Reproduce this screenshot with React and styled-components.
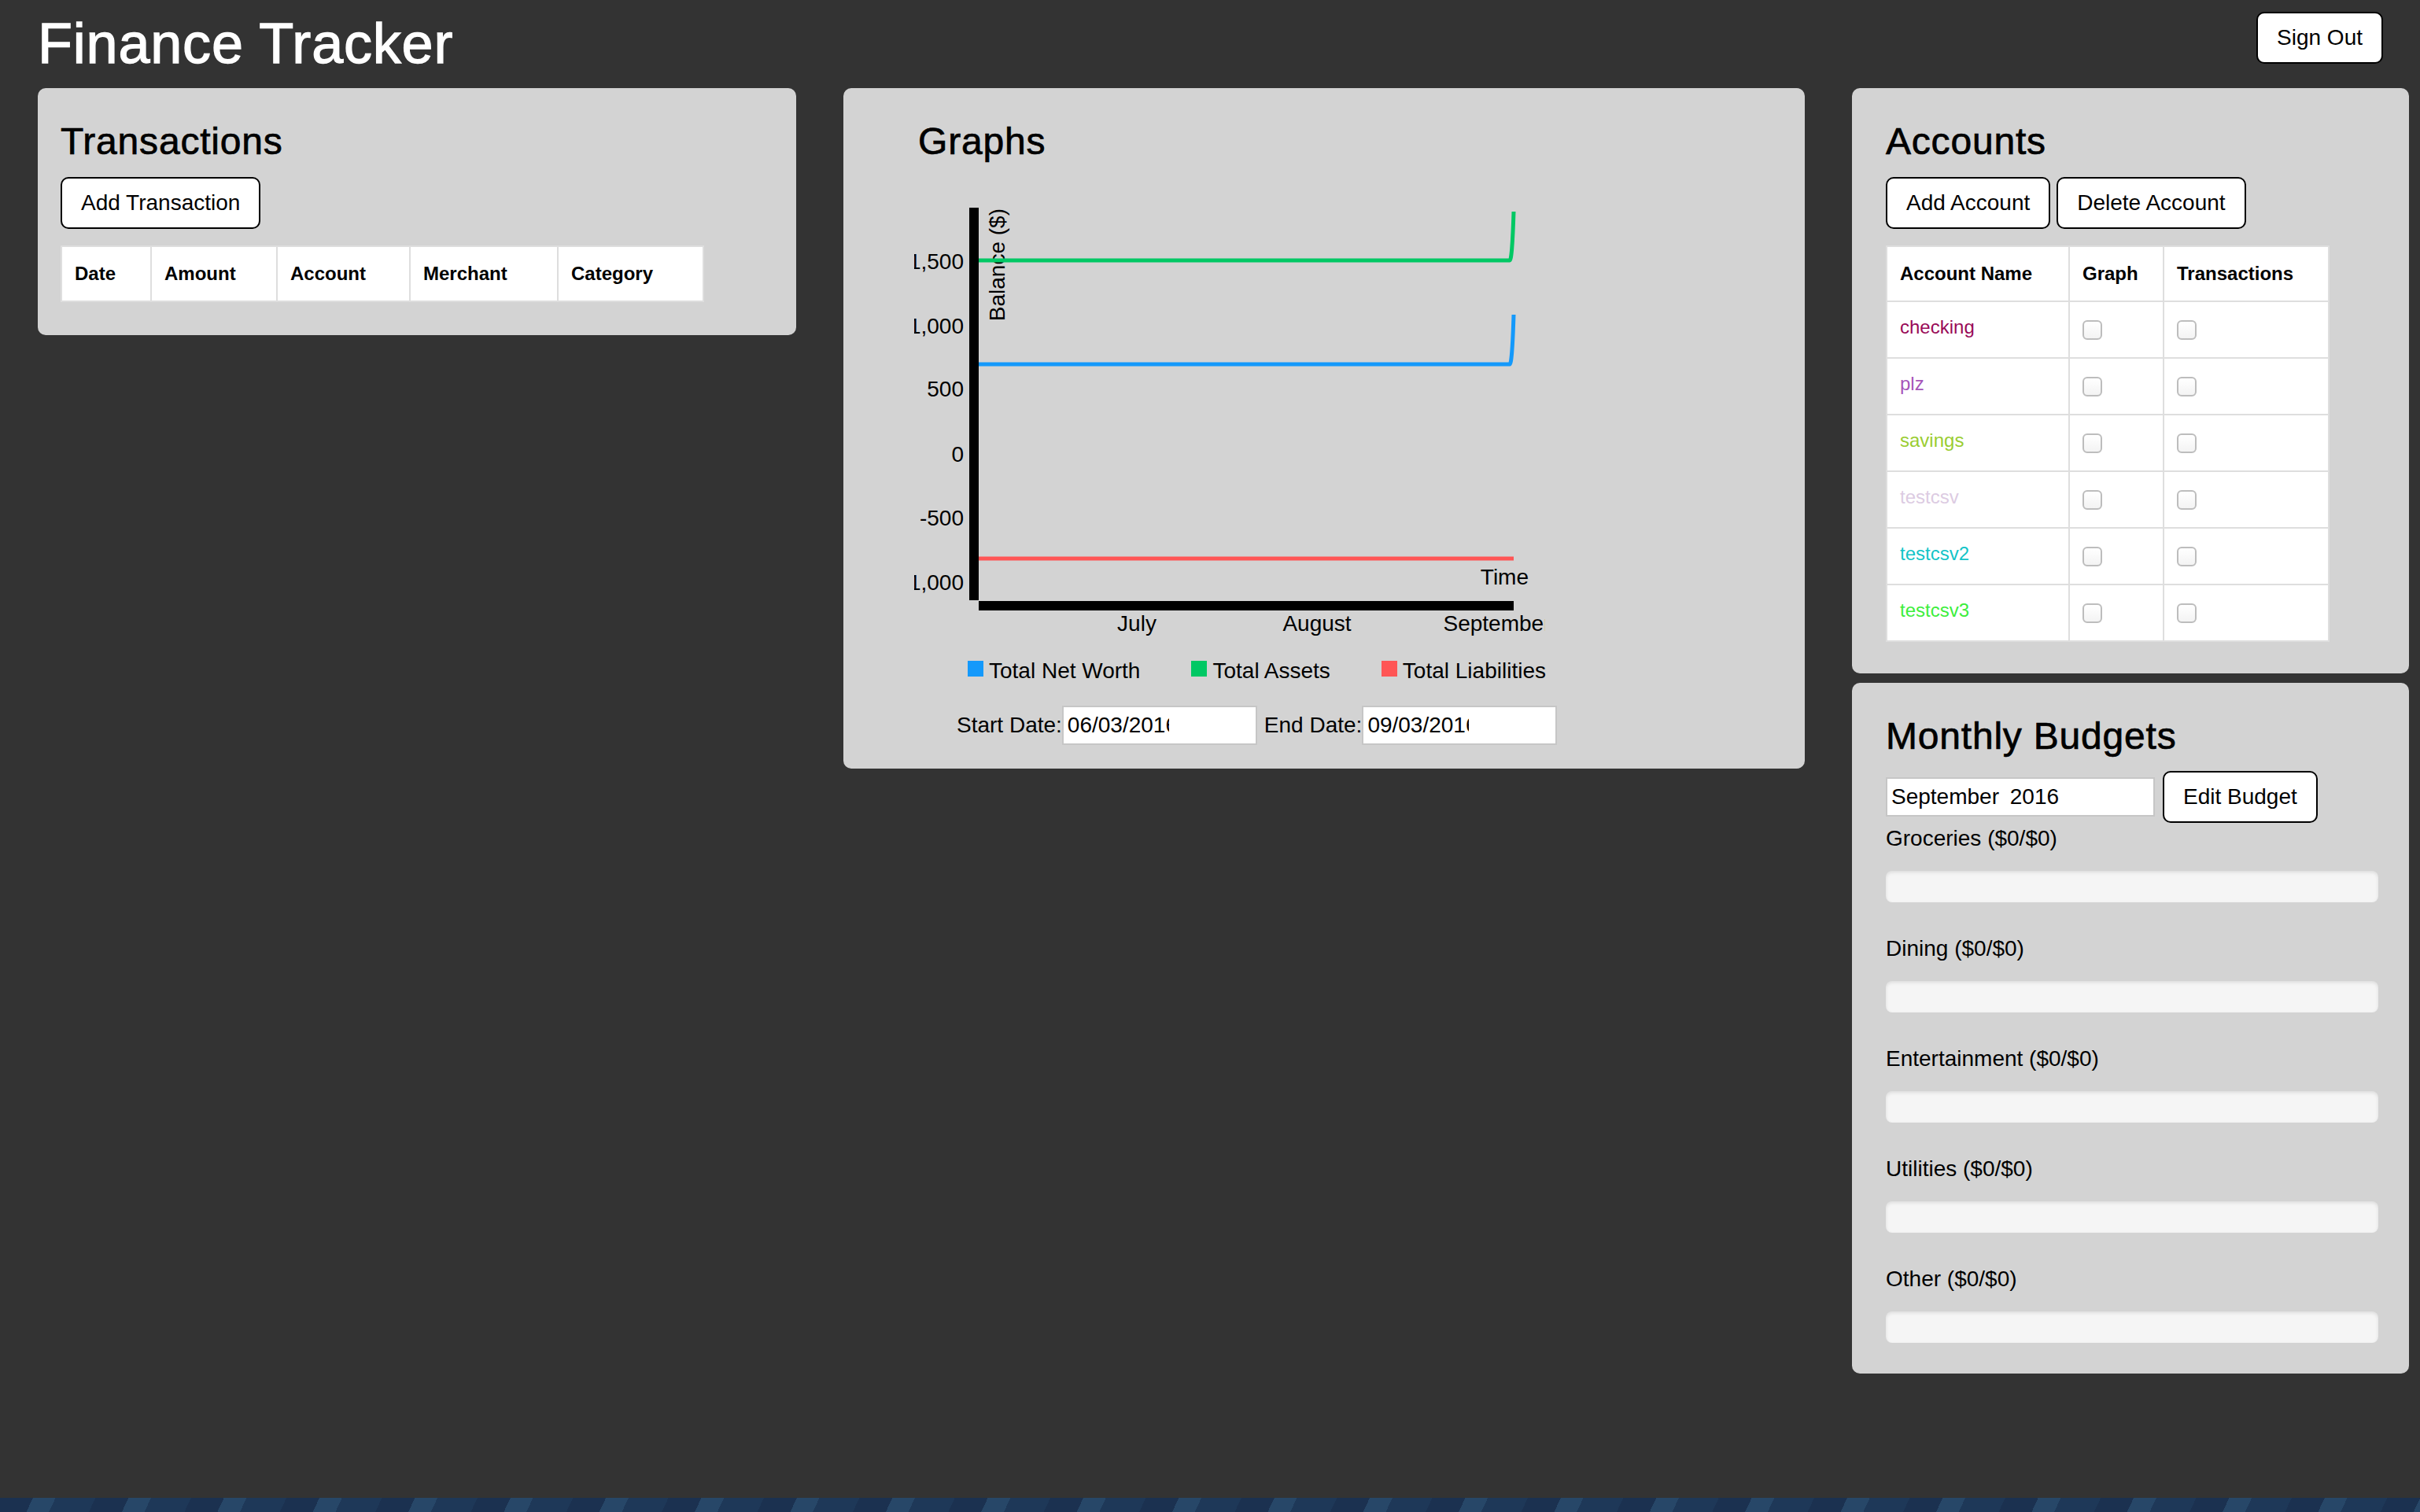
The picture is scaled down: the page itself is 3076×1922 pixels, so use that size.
import React from 'react';
import styled, { createGlobalStyle } from 'styled-components';

const GlobalStyle = createGlobalStyle`
  html, body {
    margin: 0;
    padding: 0;
    background: #333;
  }
  body {
    font-family: "Liberation Sans", Arial, Helvetica, sans-serif;
    color: #000;
  }
`;

const Page = styled.div`
  min-height: 1922px;
  display: flex;
  flex-direction: column;
  background: #333;
`;

const Main = styled.div`
  flex: 1;
`;

// the strip of desktop below the browser window
const DesktopStrip = styled.div`
  height: 18px;
  background: repeating-linear-gradient(
    115deg,
    #1b3150 0px,
    #1b3150 38px,
    #274768 38px,
    #274768 64px,
    #1e3858 64px,
    #1e3858 110px
  );
`;

const Header = styled.header`
  display: flex;
  justify-content: space-between;
  align-items: flex-start;
  box-sizing: border-box;
  height: 112px;
  padding: 15px 47px 0 48px;
`;

const Title = styled.h1`
  margin: 0;
  font-size: 72px;
  line-height: 80px;
  font-weight: 400;
  letter-spacing: 0.8px;
  color: #fff;
  -webkit-text-stroke: 1.3px #fff;
`;

const Button = styled.button`
  display: inline-flex;
  align-items: center;
  height: 66px;
  box-sizing: border-box;
  padding: 0 24px;
  background: #fff;
  border: 2px solid #000;
  border-radius: 10px;
  font-family: inherit;
  font-size: 28px;
  color: #000;
  cursor: pointer;
`;

const Columns = styled.div`
  display: grid;
  grid-template-columns: 964px 1222px 708px;
  column-gap: 60px;
  align-items: start;
  padding-left: 48px;
`;

const Stack = styled.div`
  display: flex;
  flex-direction: column;
  gap: 12px;
`;

const Panel = styled.section`
  background: #d3d3d3;
  border-radius: 10px;
  box-sizing: border-box;
  padding: 40px ${p => p.$right || 0}px ${p => p.$bottom || 0}px ${p => p.$left || 0}px;
`;

const PanelTitle = styled.h2`
  margin: 0 0 ${p => p.$gap || 0}px ${p => p.$indent || 0}px;
  font-size: 48px;
  line-height: 56px;
  font-weight: 400;
  letter-spacing: 0.8px;
  -webkit-text-stroke: 0.7px #000;
`;

const ButtonRow = styled.div`
  display: flex;
  gap: 8px;
`;

const Table = styled.table`
  margin-top: 21px;
  border-collapse: collapse;
  table-layout: fixed;
  width: ${p => p.$width}px;
  background: #fff;
  font-size: 24px;

  th, td {
    border: 2px solid #dedede;
    padding: 0 0 0 16px;
    text-align: left;
    box-sizing: border-box;
  }
  th {
    height: 70px;
    font-weight: 700;
  }
  td {
    height: 72px;
  }
`;

const AccountName = styled.span`
  color: ${p => p.$color};
  position: relative;
  top: -3px;
`;

const Check = styled.input.attrs({ type: 'checkbox' })`
  appearance: none;
  -webkit-appearance: none;
  display: block;
  margin: 0;
  width: 25px;
  height: 25px;
  box-sizing: border-box;
  border: 2px solid #bdbdbd;
  border-radius: 6px;
  background: linear-gradient(#fff, #f3f3f3);
`;

// ---- graphs ----

const ChartSvg = styled.svg`
  display: block;
  margin: 42px 0 0 90px;
  overflow: hidden;
  font-family: "Liberation Sans", Arial, Helvetica, sans-serif;
  font-size: 28px;
`;

const Legend = styled.div`
  display: flex;
  gap: 65px;
  margin: 22px 0 0 158px;
  font-size: 28px;
  line-height: 32px;
`;

const LegendItem = styled.div`
  display: flex;
  align-items: flex-start;
  gap: 7px;
`;

const Swatch = styled.span`
  width: 20px;
  height: 20px;
  margin-top: 3px;
  background: ${p => p.$color};
`;

const DateRow = styled.div`
  display: flex;
  align-items: center;
  margin: 28px 0 0 144px;
  font-size: 28px;
  line-height: 32px;
`;

const DateLabel = styled.span`
  margin-left: ${p => p.$gap || 0}px;
`;

const DateField = styled.div`
  display: flex;
  align-items: center;
  width: 248px;
  height: 50px;
  box-sizing: border-box;
  padding-left: 5px;
  background: #fff;
  border: 2px solid #c6c6c6;
`;

const DateValue = styled.span`
  display: inline-block;
  width: 129px;
  overflow: hidden;
  white-space: nowrap;
`;

// ---- budgets ----

const BudgetControls = styled.div`
  display: flex;
  align-items: center;
  gap: 10px;
`;

const MonthField = styled.div`
  display: flex;
  align-items: center;
  width: 342px;
  height: 50px;
  box-sizing: border-box;
  padding-left: 5px;
  background: #fff;
  border: 2px solid #c6c6c6;
  font-size: 28px;
  word-spacing: 6px;
`;

const BudgetLabel = styled.div`
  font-size: 28px;
  line-height: 40px;
  margin-bottom: 21px;
`;

const ProgressTrack = styled.div`
  height: 40px;
  margin-bottom: 39px;
  border-radius: 8px;
  background: #f5f5f5;
  box-shadow: inset 0 2px 4px rgba(0, 0, 0, 0.1);
`;

const accounts = [
  { name: 'checking', color: '#990a58' },
  { name: 'plz', color: '#a654b9' },
  { name: 'savings', color: '#9acd32' },
  { name: 'testcsv', color: '#dccbe2' },
  { name: 'testcsv2', color: '#12c4c8' },
  { name: 'testcsv3', color: '#3cee3c' },
];

const budgets = ['Groceries', 'Dining', 'Entertainment', 'Utilities', 'Other'];

const yTicks = [
  { label: '1,500', y: 92 },
  { label: '1,000', y: 174 },
  { label: '500', y: 254 },
  { label: '0', y: 337 },
  { label: '-500', y: 418 },
  { label: '-1,000', y: 500 },
];

const xTicks = [
  { label: 'July', x: 283 },
  { label: 'August', x: 512 },
  { label: 'September', x: 741 },
];

const series = [
  { name: 'Total Net Worth', color: '#1499fb', d: 'M82 213 H757 Q760 213 762 150' },
  { name: 'Total Assets', color: '#00c864', d: 'M82 81 H757 Q760 81 762 19' },
  { name: 'Total Liabilities', color: '#ff5555', d: 'M82 460 H762' },
];

function BalanceChart() {
  return (
    <ChartSvg width="802" height="565" viewBox="0 0 802 565">
      <rect x="70" y="14" width="12" height="499" fill="#000" />
      <rect x="82" y="514" width="680" height="12" fill="#000" />
      {yTicks.map(t => (
        <text key={t.label} x="63" y={t.y} textAnchor="end">{t.label}</text>
      ))}
      {xTicks.map(t => (
        <text key={t.label} x={t.x} y="552" textAnchor="middle">{t.label}</text>
      ))}
      <text transform="rotate(-90)" x="-15" y="115" textAnchor="end">Balance ($)</text>
      <text x="781" y="493" textAnchor="end">Time</text>
      {series.map(s => (
        <path key={s.name} d={s.d} stroke={s.color} strokeWidth="5" fill="none" />
      ))}
    </ChartSvg>
  );
}

export default function App() {
  return (
    <Page>
      <GlobalStyle />
      <Main>
        <Header>
          <Title>Finance Tracker</Title>
          <Button>Sign Out</Button>
        </Header>

        <Columns>
          <Panel $left={29} $bottom={42}>
            <PanelTitle $gap={17}>Transactions</PanelTitle>
            <div>
              <Button>Add Transaction</Button>
            </div>
            <Table $width={816}>
              <colgroup>
                <col style={{ width: 114 }} />
                <col style={{ width: 160 }} />
                <col style={{ width: 169 }} />
                <col style={{ width: 188 }} />
                <col style={{ width: 185 }} />
              </colgroup>
              <thead>
                <tr>
                  <th>Date</th>
                  <th>Amount</th>
                  <th>Account</th>
                  <th>Merchant</th>
                  <th>Category</th>
                </tr>
              </thead>
            </Table>
          </Panel>

          <Panel $bottom={30}>
            <PanelTitle $indent={95}>Graphs</PanelTitle>
            <BalanceChart />
            <Legend>
              {series.map(s => (
                <LegendItem key={s.name}>
                  <Swatch $color={s.color} />
                  {s.name}
                </LegendItem>
              ))}
            </Legend>
            <DateRow>
              <DateLabel>Start Date:</DateLabel>
              <DateField><DateValue>06/03/2016</DateValue></DateField>
              <DateLabel $gap={9}>End Date:</DateLabel>
              <DateField><DateValue>09/03/2016</DateValue></DateField>
            </DateRow>
          </Panel>

          <Stack>
            <Panel $left={43} $bottom={40}>
              <PanelTitle $gap={17}>Accounts</PanelTitle>
              <ButtonRow>
                <Button>Add Account</Button>
                <Button>Delete Account</Button>
              </ButtonRow>
              <Table $width={562}>
                <colgroup>
                  <col style={{ width: 232 }} />
                  <col style={{ width: 120 }} />
                  <col style={{ width: 210 }} />
                </colgroup>
                <thead>
                  <tr>
                    <th>Account Name</th>
                    <th>Graph</th>
                    <th>Transactions</th>
                  </tr>
                </thead>
                <tbody>
                  {accounts.map(a => (
                    <tr key={a.name}>
                      <td><AccountName $color={a.color}>{a.name}</AccountName></td>
                      <td><Check /></td>
                      <td><Check /></td>
                    </tr>
                  ))}
                </tbody>
              </Table>
            </Panel>

            <Panel $left={43} $right={39}>
              <PanelTitle $gap={16}>Monthly Budgets</PanelTitle>
              <BudgetControls>
                <MonthField>September 2016</MonthField>
                <Button>Edit Budget</Button>
              </BudgetControls>
              {budgets.map(b => (
                <div key={b}>
                  <BudgetLabel>{b} ($0/$0)</BudgetLabel>
                  <ProgressTrack />
                </div>
              ))}
            </Panel>
          </Stack>
        </Columns>
      </Main>
      <DesktopStrip />
    </Page>
  );
}
